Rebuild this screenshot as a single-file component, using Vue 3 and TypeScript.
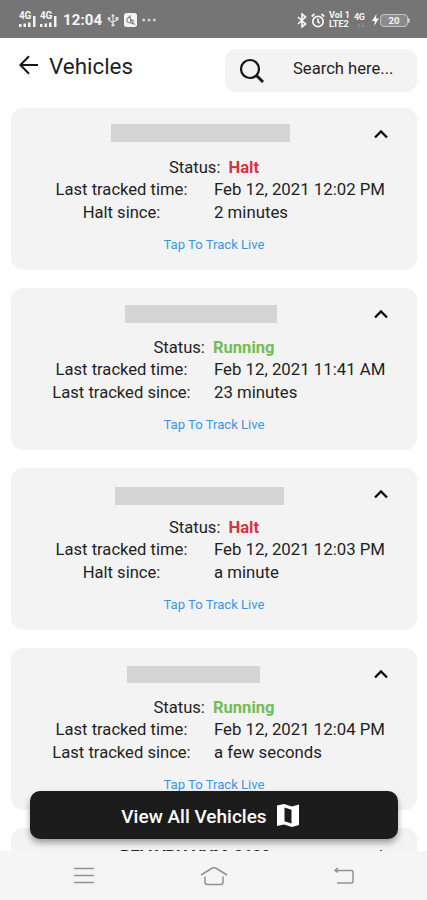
<script setup lang="ts">
interface Vehicle {
  status: 'Halt' | 'Running'
  time: string
  since: string
  plateStart: number
  plateWidth: number
  plateTop: number
  plateHeight: number
}

const vehicles: Vehicle[] = [
  { status: 'Halt', time: 'Feb 12, 2021 12:02 PM', since: '2 minutes', plateStart: 100, plateWidth: 179, plateTop: 16, plateHeight: 18 },
  { status: 'Running', time: 'Feb 12, 2021 11:41 AM', since: '23 minutes', plateStart: 114, plateWidth: 152, plateTop: 17, plateHeight: 18 },
  { status: 'Halt', time: 'Feb 12, 2021 12:03 PM', since: 'a minute', plateStart: 104, plateWidth: 169, plateTop: 19, plateHeight: 18 },
  { status: 'Running', time: 'Feb 12, 2021 12:04 PM', since: 'a few seconds', plateStart: 116, plateWidth: 133, plateTop: 18, plateHeight: 17 },
]

const plateStyle = (v: Vehicle) => ({
  marginLeft: `${v.plateStart}px`,
  marginTop: `${v.plateTop}px`,
  width: `${v.plateWidth}px`,
  height: `${v.plateHeight}px`,
})
</script>

<template>
  <div class="screen">
    <header class="status-bar">
      <div class="status-left">
        <div v-for="n in 2" :key="n" class="signal">
          <span class="net">4G</span>
          <svg width="18" height="11" viewBox="0 0 18 11" fill="#f2f2f2">
            <path d="M0 8h2.500v3H0zM4.500 7.500H7V11H4.500zM9 6.500h2.500V11H9zM14 0h2.500v11H14z" />
          </svg>
        </div>
        <span class="clock">12:04</span>
        <svg class="usb" width="12" height="14" viewBox="0 0 12 14" fill="none" stroke="#dcdcdc" stroke-width="1.300">
          <path d="M6 2v10M2 5v2l4 3M10 5v2L6 9" /><path d="M4 3.500 6 .5l2 3z" fill="#dcdcdc" stroke="none" />
          <circle cx="6" cy="12" r="1.600" fill="#dcdcdc" stroke="none" /><circle cx="2" cy="5.500" r="1.500" fill="#dcdcdc" stroke="none" /><path d="M8.500 4h3v3h-3z" fill="#dcdcdc" stroke="none" />
        </svg>
        <svg class="app-badge" width="13" height="14" viewBox="0 0 13 14">
          <rect width="13" height="14" rx="2.500" fill="#f3f3f3" />
          <path d="M3 9V6l3-3 1 7M3 9l7 2-4-5 4 2" fill="none" stroke="#888" stroke-width="1.200" />
        </svg>
        <svg class="more" width="14" height="4" viewBox="0 0 14 4" fill="#d4d4d4"><circle cx="1.700" cy="2" r="1.500" /><circle cx="7" cy="2" r="1.500" /><circle cx="12.300" cy="2" r="1.500" /></svg>
      </div>
      <div class="status-right">
        <svg width="10" height="15" viewBox="0 0 10 15" fill="none" stroke="#f4f4f4" stroke-width="1.700"><path d="m1 4 7.500 7L5 14V1l3.500 3L1 11" /></svg>
        <svg class="alarm" width="14" height="15" viewBox="0 0 14 15" fill="none" stroke="#f4f4f4" stroke-width="1.700"><circle cx="7" cy="8.500" r="5.200" /><path d="M7 5.500V9l2 1M.7 3.500 3.500 1M13.300 3.500 10.500 1" /></svg>
        <div class="lte"><span>VoI 1</span><span>LTE2</span></div>
        <div class="data">
          <span>4G</span>
          <svg width="8" height="5" viewBox="0 0 8 5" fill="none" stroke="#999" stroke-width=".8"><path d="M2 5V1M.7 2.300 2 1l1.300 1.300M6 0v4M4.700 2.700 6 4l1.300-1.300" /></svg>
        </div>
        <svg class="bolt" width="7" height="12" viewBox="0 0 7 12" fill="#fff"><path d="M4.500 0 0 7h3l-1 5 5-7.500H4z" /></svg>
        <div class="battery">20</div>
        <span class="battery-tip"></span>
      </div>
    </header>

    <div class="toolbar">
      <svg class="back" width="20" height="20" viewBox="0 0 20 20" fill="none" stroke="#171717" stroke-width="2"><path d="M19 10H2M10 1.200 1.400 10l8.600 8.800" /></svg>
      <h1>Vehicles</h1>
      <div class="search">
        <svg width="26" height="26" viewBox="0 0 26 26" fill="none" stroke="#151515"><circle cx="11" cy="11" r="9" stroke-width="2.200" /><path d="m17.500 17.500 6.500 6.500" stroke-width="2.800" /></svg>
        <span>Search here...</span>
      </div>
    </div>

    <main class="list">
      <article v-for="v in vehicles" :key="v.time" class="card">
        <div class="card-head">
          <div class="plate" :style="plateStyle(v)"></div>
          <svg class="chevron" width="16" height="12" viewBox="0 0 16 12" fill="none" stroke="#111" stroke-width="2.300"><path d="m2 9.500 6-6 6 6" /></svg>
        </div>
        <p class="state">Status:<b :class="v.status.toLowerCase()">{{ v.status }}</b></p>
        <dl>
          <dt>Last tracked time:</dt><dd>{{ v.time }}</dd>
          <dt>{{ v.status === 'Halt' ? 'Halt since:' : 'Last tracked since:' }}</dt><dd>{{ v.since }}</dd>
        </dl>
        <a class="track">Tap To Track Live</a>
      </article>
      <article class="card next">
        <span class="next-name">BELLVRH HVM-3639</span>
        <svg class="next-chevron" width="16" height="12" viewBox="0 0 16 12" fill="none" stroke="#111" stroke-width="2.300"><path d="m2 9.500 6-6 6 6" /></svg>
      </article>
    </main>

    <button class="view-all">
      <span>View All Vehicles</span>
      <svg width="22" height="23" viewBox="0 0 22 23"><path d="M0 1.500 7 0l8 2.500L22 .5v20.500L15 23l-8-2.500L0 22z" fill="#fff" /><path d="m7.500 3.500 7 2.200v13.800l-7-2.200z" fill="#1c1c1c" /></svg>
    </button>

    <nav>
      <svg width="20" height="17" viewBox="0 0 20 17" stroke="#929292" stroke-width="1.500"><path d="M0 1.500h20M0 8.500h20M0 15.500h20" /></svg>
      <svg width="28" height="20" viewBox="0 0 28 20" fill="none" stroke="#929292" stroke-width="1.500"><path d="M1 9 11.500 2.500q2.500-1.500 5 0L27 9M5 10.500v5.500q0 2.500 2.500 2.500h13q2.500 0 2.500-2.500v-5.500" /></svg>
      <svg width="20" height="18" viewBox="0 0 20 18" fill="none" stroke="#929292" stroke-width="1.500"><path d="M1 3.500h16.500q1.500 0 1.500 1.500v9.500q0 1.500-1.500 1.500H3M4 .8 1 3.500l3 2" /></svg>
    </nav>
  </div>
</template>

<style>
body { margin: 0; }
</style>

<style scoped>
.screen { position: relative; width: 427px; height: 900px; overflow: hidden; background: #fff; color: #1f1f1f; font-family: Roboto, sans-serif; display: flex; flex-direction: column; }
svg { display: block; flex: none; }
.status-bar { height: 38px; flex: none; box-sizing: border-box; background: #757575; color: #f6f6f6; display: flex; justify-content: space-between; padding: 0 17px 0 19px; }
.status-left, .status-right { display: flex; align-items: center; height: 40px; }
.signal { width: 21px; height: 16px; display: flex; flex-direction: column; margin-top: -3px; position: relative; }
.signal svg { margin-top: auto; }
.net { position: absolute; left: 0; top: 0; font-size: 10px; line-height: 9px; font-weight: 700; letter-spacing: -.3px; }
.clock { width: 39px; margin-left: 2px; font-size: 15px; font-weight: 700; letter-spacing: .1px; line-height: 20px; }
.usb { margin-left: 5px; }
.app-badge { margin-left: 5px; }
.more { margin-left: 5px; }
.alarm { margin-left: 4px; }
.lte { margin: -1px 0 0 4px; width: 23px; font-size: 9px; height: 19px; font-weight: 700; }
.lte span { display: block; white-space: nowrap; height: 9px; line-height: 11px; }
.data { margin-left: 2px; width: 14px; height: 17px; font-size: 9px; line-height: 11px; font-weight: 700; letter-spacing: -.3px; }
.data span { display: block; }
.data svg { margin-left: 3px; }
.bolt { margin-left: 4px; }
.battery { width: 26px; height: 11px; border: 1px solid #c4c4c4; border-radius: 4px; margin-left: 1px; text-align: center; font-size: 9.500px; font-weight: 700; line-height: 11px; background: #8a8a8a; }
.battery-tip { width: 2px; height: 5px; background: #ccc; border-radius: 0 2px 2px 0; }
.toolbar { height: 70px; flex: none; box-sizing: border-box; display: flex; align-items: flex-start; padding: 11px 10px 0 19px; }
.back { margin-top: 6px; }
h1 { margin: 4px 0 0 10px; font-size: 22.400px; line-height: 26px; font-weight: 400; width: 92px; }
.search { margin-left: auto; width: 192px; height: 43px; border-radius: 11px; background: #f3f3f3; display: flex; align-items: center; box-sizing: border-box; padding-left: 14px; }
.search span { margin: -3px 0 0 28px; font-size: 16.600px; line-height: 22px; white-space: nowrap; }
.list { display: flex; flex-direction: column; gap: 18px; padding: 0 10px 0 11px; height: 743px; flex: none; overflow: hidden; }
.card { height: 162px; flex: none; background: #f3f3f3; border-radius: 12px; }
.card-head { height: 49px; display: flex; align-items: flex-start; }
.plate { background: #d4d4d4; flex: none; }
.chevron { margin: 20px 28px 0 auto; }
.state { margin: 0; font-size: 16.600px; line-height: 22px; text-align: center; }
.state b { margin-left: 8px; }
.halt { color: #d9333f; }
.running { color: #73bd55; }
dl { margin: -1px 0 0; display: grid; grid-template-columns: 203px 1fr; font-size: 16.800px; grid-auto-rows: 22.500px; align-items: baseline; line-height: 22px; }
dt { text-align: center; margin-left: 18px; font-size: 16.600px; }
dd { margin: 0; white-space: nowrap; }
.track { display: block; margin-top: 13px; text-align: center; color: #3897e0; font-size: 13.100px; line-height: 18px; }
.next { position: relative; }
.next-name { display: block; padding: 19px 0 0 109px; font-size: 16.500px; font-weight: 700; line-height: 20px; letter-spacing: -.25px; }
.next-chevron { position: absolute; right: 28px; top: 20px; }
.view-all { position: absolute; left: 30px; top: 791px; width: 368px; height: 48px; border: 0; border-radius: 10px; background: #1c1c1c; color: #fff; box-shadow: 0 4px 6px rgb(0 0 0 / 35%); display: flex; align-items: center; justify-content: center; gap: 10px; font: 500 19px/24px Roboto, sans-serif; padding: 0 8px 0 0; }
.view-all span { padding-top: 4px; }
nav { height: 49px; flex: none; box-sizing: border-box; background: #f5f5f5; display: flex; align-items: center; justify-content: space-between; padding: 0 73px 0 74px; }
</style>
